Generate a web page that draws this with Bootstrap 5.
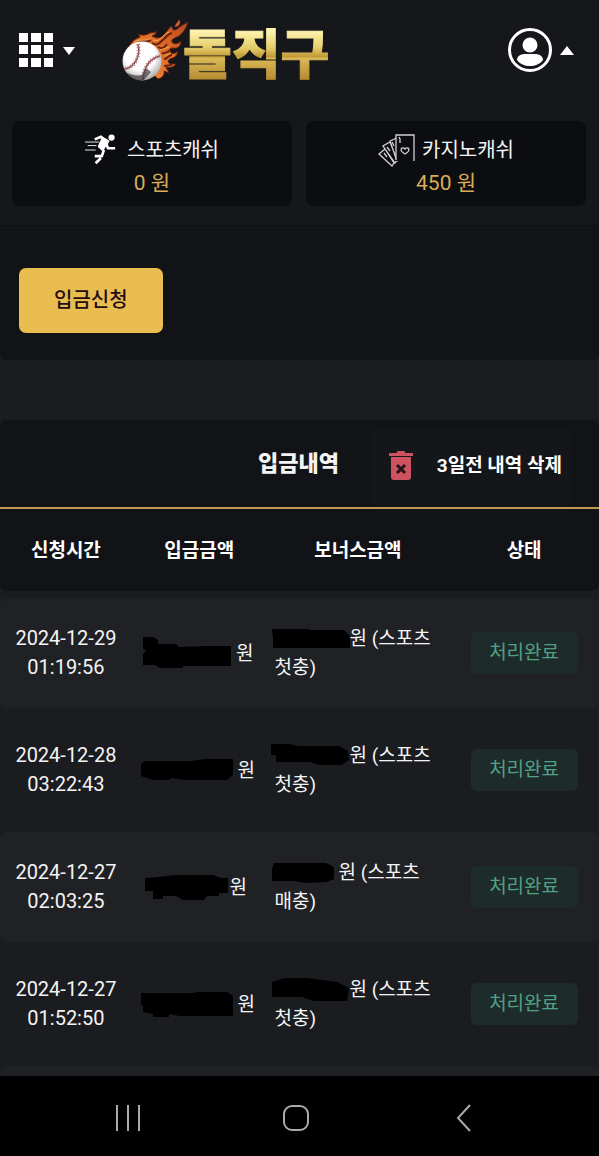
<!DOCTYPE html>
<html lang="ko">
<head>
<meta charset="utf-8">
<meta name="viewport" content="width=device-width, initial-scale=1">
<title>돌직구 - 입금신청</title>
<link href="https://cdn.jsdelivr.net/npm/bootstrap@5.3.0/dist/css/bootstrap.min.css" rel="stylesheet">
<style>
  body { background: #1b1c20; color: #f4f4f5; font-family: Roboto, "Noto Sans CJK KR", sans-serif; font-size: 20px; }
  svg { display: block; overflow: visible; }
  .icon-btn { background: none; border: 0; padding: 0; color: #fff; }
  .site-top { background: #16171b; border-bottom: 1px solid #0e0f12; padding-bottom: 19px; }
  .top-bar { height: 102px; padding: 0 25px 2px 19px; }
  .brand { margin-left: 46px; }
  .wordmark { font: 900 53px "Noto Sans CJK KR", sans-serif; }
  .cash-row { padding: 19px 13px 0 12px; gap: 14px; }
  .cash { background: #0c0d11; border-radius: 8px; padding: 13px 0 5px; }
  .cash-title { height: 32px; line-height: 32px; }
  .cash-title span { padding-left: 3px; }
  .cash-sum { color: #d9ac55; font-size: 21px; line-height: 35px; }
  .apply { background: #121317; padding: 42px 19px 27px; border-radius: 0 0 6px 6px; margin-bottom: 60px; }
  .btn-apply, .btn-apply:hover { background: #eabd50; color: #240c10; font-size: 20px; font-weight: 500; line-height: 29px; padding: 18px 35px; border: 0; border-radius: 7px; }
  .apply .btn { display: block; }
  .list-head { background: #121317; height: 89px; padding: 9px 27px 0 0; gap: 32px; border-bottom: 2px solid #bd9c50; border-radius: 6px 6px 0 0; }
  .list-head h2 { font-size: 22px; font-weight: 900; line-height: 30px; margin-top: 20px; }
  .btn-clear, .btn-clear:hover { background: #15161a; color: #fff; font-size: 19px; font-weight: 700; width: 201px; height: 76px; padding: 0 10px 2px 18px; border: 0; }
  .history { width: 100%; table-layout: fixed; border-collapse: separate; border-spacing: 0 7px; margin-top: -7px; font-size: 19px; line-height: 29px; }
  .history th { background: #121317; height: 82px; text-align: center; font-weight: 700; color: #fff; }
  .history td { height: 110px; text-align: center; vertical-align: middle; }
  .history tbody tr:nth-child(odd) td { background: #202125; }
  .history td:first-child, .history th:first-child { border-bottom-left-radius: 7px; }
  .history td:last-child, .history th:last-child { border-bottom-right-radius: 7px; }
  .history td:first-child { font-size: 20px; border-top-left-radius: 7px; }
  .history td:last-child { border-top-right-radius: 7px; }
  .history td.bonus { text-align: left; padding-left: 8px; }
  .history td.sum { padding-right: 3px; }
  .bonus svg { display: inline-block; vertical-align: middle; }
  .c-time { width: 22%; } .c-sum { width: 22.5%; } .c-bonus { width: 30.5%; }
  .state { display: inline-block; background: #1e2b2b; color: #51a182; border-radius: 6px; width: 107px; line-height: 42px; }
  .phone-nav { background: #000; height: 80px; padding: 4px 51px 0 44px; flex: none; }
</style>
</head>
<body class="vh-100 d-flex flex-column overflow-hidden">
<main class="flex-grow-1 overflow-hidden">
  <header class="site-top">
    <div class="top-bar d-flex align-items-center">
      <button class="icon-btn" aria-label="메뉴">
        <svg width="57" height="34" viewBox="0 0 57 34" fill="#fff"><path d="M0 0h9v9H0zM12 0h10v9H12zM25 0h9v9h-9zM0 12h9v9H0zM12 12h10v9H12zM25 12h9v9h-9zM0 25h9v9H0zM12 25h10v9H12zM25 25h9v9h-9zM44 14h12l-6 8z"/></svg>
      </button>
      <a class="brand" href="#" aria-label="돌직구">
        <svg width="212" height="62" viewBox="0 0 212 62">
          <defs>
            <linearGradient id="gold" gradientUnits="userSpaceOnUse" x1="0" y1="12" x2="0" y2="61">
              <stop offset="0" stop-color="#fff3b0"/><stop offset=".35" stop-color="#e3cd68"/><stop offset=".52" stop-color="#c29a38"/><stop offset=".56" stop-color="#d9b957"/><stop offset="1" stop-color="#b68a2f"/>
            </linearGradient>
            <linearGradient id="fire" x1="0" y1="1" x2="1" y2="0"><stop offset="0" stop-color="#f0913c"/><stop offset=".6" stop-color="#dc6a26"/><stop offset="1" stop-color="#b94520"/></linearGradient>
            <radialGradient id="ball" cx=".45" cy=".35" r=".65"><stop offset=".6" stop-color="#fff"/><stop offset="1" stop-color="#aaa"/></radialGradient>
          </defs>
          <path fill="url(#fire)" stroke="#5b1f12" d="M5 33C7 25 12 20 18 18l-2-3c5 2 8 1 12-1 4-1 6 0 7-2-1 3-2 4-5 5 5 3 9 2 12-1 3-3 4-7 8-9 0 4 2 5 5 3l4-3 7-4c-2 7-5 11-9 14-4 2-8 3-7 6 2 3 6 2 9-1 0 5-3 8-8 7-4 0-5 3-2 5 3 1 5 0 7-2-1 6-5 7-8 8-3 2-2 4 1 5h5c-3 4-7 4-10 3l3 6-5-2c1 4-2 7-6 8z"/>
          <path fill="none" stroke="#6b210f" stroke-width="2" d="M15 24c6-4 9 1 14-3M30 24c6 4 8-1 12-4 3-3 4-5 8-6M36 28c5 3 7 0 9-3M40 34c4 1 5-2 9-2M42 40c4 0 4-4 8-4M42 47l8-1"/>
          <path fill="none" stroke="#f7a64d" d="M12 23c7-4 11 0 17-4M31 21c8 3 9-6 16-8M38 31l9-3M43 37l6-3"/>
          <path fill="#d85d22" d="M53 8c0-4 4-5 4-8 2 4 1 7-4 8z"/>
          <circle cx="20" cy="42" r="19.500" fill="url(#ball)"/>
          <path fill="none" stroke="#85434a" stroke-width="1.500" d="M16 25c3 13-4 24-14 25M38 37c-10 2-17 12-17 24"/>
          <path fill="none" stroke="#b77a7e" stroke-dasharray="1 2" stroke-width="4" d="M16 25c3 13-4 24-14 25M38 37c-10 2-17 12-17 24"/>
          <path fill="#333" fill-opacity=".65" d="M4 53c5 3 11 4 16 3l4-7 5 4-7 8C14 62 8 59 4 53z"/>
          <text class="wordmark" x="61" y="55" fill="url(#gold)" stroke="url(#gold)">돌직구</text>
        </svg>
      </a>
      <button class="icon-btn ms-auto" aria-label="내 계정">
        <svg width="66" height="44" viewBox="0 0 66 44" fill="#fff"><circle cx="22" cy="22" r="20.500" fill="none" stroke="#fff" stroke-width="3"/><circle cx="22" cy="17" r="7.500"/><path d="M9 32c0-4 4-6 8-6h10c4 0 8 2 8 6-3 4-8 6-13 6S12 36 9 32zM52 27l7-9 7 9z"/></svg>
      </button>
    </div>
    <div class="cash-row d-flex">
      <div class="cash flex-fill w-50 text-center">
        <div class="cash-title d-flex justify-content-center align-items-center">
          <svg class="me-2" width="31" height="32" viewBox="0 0 35 34" fill="none" stroke="#fff" stroke-linejoin="round"><circle cx="30" cy="3" r="3.500" fill="#fff" stroke="none"/><path stroke-width="3" d="M11 5l7-3 5 4"/><path fill="#fff" stroke-width="3" d="M20 4l6 3-6 9-4-3z"/><path stroke-width="3" d="M17 13l4 5-2 6h-8M24 10l2 5h8M18 26l-6 6"/><path stroke-width="1" d="M0 8h16M3 12h10M0 17h12"/></svg>
          <span>스포츠캐쉬</span>
        </div>
        <div class="cash-sum">0 원</div>
      </div>
      <div class="cash flex-fill w-50 text-center">
        <div class="cash-title d-flex justify-content-center align-items-center">
          <svg class="me-1" width="37" height="32" viewBox="0 1 37 32" fill="#0c0d11" stroke="#d2d2d4" stroke-width="1.300"><path d="M14 33L1 21l6-5 9 14zM17 30L5 13l7-4 7 18zM19 28L12 8l7-3 2 22z"/><path stroke="none" d="M18 2h18v26H18z"/><path fill="none" d="M36 28V2H18v25M27 21c-7-4-3-8 0-5 3-3 7 1 0 5zM22 10V6l-1-2M6 20l3 4M9 14l3 4M14 9l2 4"/></svg>
          <span>카지노캐쉬</span>
        </div>
        <div class="cash-sum">450 원</div>
      </div>
    </div>
  </header>

  <section class="apply"><button class="btn btn-apply">입금신청</button></section>

  <section>
    <div class="list-head d-flex justify-content-end">
      <h2>입금내역</h2>
      <button class="btn btn-clear rounded-1 d-flex align-items-center justify-content-between">
        <svg width="24" height="30" viewBox="0 0 24 30"><path fill="#ce5360" d="M0 2h7l2-2h6l2 2h7v3H0zM2 6h20v20q0 3-3 3H5q-3 0-3-3z"/><path stroke="#241318" stroke-width="3" d="M8 14l8 8M16 14l-8 8"/></svg>
        <span>3일전 내역 삭제</span>
      </button>
    </div>
    <table class="history">
      <colgroup><col class="c-time"><col class="c-sum"><col class="c-bonus"><col></colgroup>
      <thead><tr><th>신청시간</th><th>입금금액</th><th>보너스금액</th><th>상태</th></tr></thead>
      <tbody>
        <tr>
          <td>2024-12-29<br>01:19:56</td>
          <td class="sum"><div class="d-flex justify-content-center align-items-center gap-1"><svg width="89" height="22" viewBox="0 10 89 22"><path d="M0 5h10l5 3v4h18l3 3 27-1h25v20H40v2H17l-5-3H0V22l3-4-3-1z"/></svg>원</div></td>
          <td class="bonus"><svg width="75" height="20" viewBox="0 0 75 20"><path d="M-3-1h37v1h35l6 6v12H-2V8z"/></svg>원 (스포츠<br>첫충)</td>
          <td><span class="state">처리완료</span></td>
        </tr>
        <tr>
          <td>2024-12-28<br>03:22:43</td>
          <td class="sum"><div class="d-flex justify-content-center align-items-center gap-1"><svg width="92" height="22" viewBox="0 0 92 22"><path d="M0 5l4-3h47l12-2h29v16l-6 5H44l-14-2-1 2H12L0 17z"/></svg>원</div></td>
          <td class="bonus"><svg width="75" height="22" viewBox="0 0 75 22"><path d="M-4-2h18l10 2h40l9 5 1 9-7 5H45l-10-3H1V9h-5z"/></svg>원 (스포츠<br>첫충)</td>
          <td><span class="state">처리완료</span></td>
        </tr>
        <tr>
          <td>2024-12-27<br>02:03:25</td>
          <td class="sum"><div class="d-flex justify-content-center align-items-center pe-1"><svg width="84" height="25" viewBox="0 0 84 25"><path d="M0 3l14-1 16-2h38l8 3h7v15h-9v3H62l-3 4H38l-7-4H18v3H8v-8H0z"/></svg>원</div></td>
          <td class="bonus"><svg class="me-1" width="60" height="20" viewBox="0 0 60 20"><path d="M-1-1h52l8 4v12l-7 3-20 1-14-2H-3V5z"/></svg>원 (스포츠<br>매충)</td>
          <td><span class="state">처리완료</span></td>
        </tr>
        <tr>
          <td>2024-12-27<br>01:52:50</td>
          <td class="sum"><div class="d-flex justify-content-center align-items-center gap-1"><svg width="92" height="25" viewBox="0 0 92 25"><path d="M0 1h53l2-1h31l6 4v20H39l-11-2v3H12v-3L2 20V13H0z"/></svg>원</div></td>
          <td class="bonus"><svg width="75" height="24" viewBox="0 0 75 24"><path d="M-3 3L10-1h22l30 4 12 6-2 13H39l-12-4H-3z"/></svg>원 (스포츠<br>첫충)</td>
          <td><span class="state">처리완료</span></td>
        </tr>
        <tr><td></td><td></td><td></td><td></td></tr>
      </tbody>
    </table>
  </section>
</main>
<nav class="phone-nav d-flex" aria-label="시스템">
  <button class="icon-btn flex-fill d-flex justify-content-center align-items-center" aria-label="최근 앱"><svg width="24" height="26" viewBox="0 0 24 26" stroke="#aaa" stroke-width="2"><path d="M1 0v26M12 0v26M23 0v26"/></svg></button>
  <button class="icon-btn flex-fill d-flex justify-content-center align-items-center" aria-label="홈"><svg width="26" height="26" viewBox="0 0 26 26"><rect x="1" y="1" width="24" height="24" rx="8" fill="none" stroke="#aaa" stroke-width="2"/></svg></button>
  <button class="icon-btn flex-fill d-flex justify-content-center align-items-center" aria-label="뒤로"><svg width="24" height="26" viewBox="0 0 24 26" fill="none" stroke="#aaa" stroke-width="2"><path d="M18 0L6 13l12 13"/></svg></button>
</nav>
<script src="https://cdn.jsdelivr.net/npm/bootstrap@5.3.0/dist/js/bootstrap.bundle.min.js"></script>
</body>
</html>
